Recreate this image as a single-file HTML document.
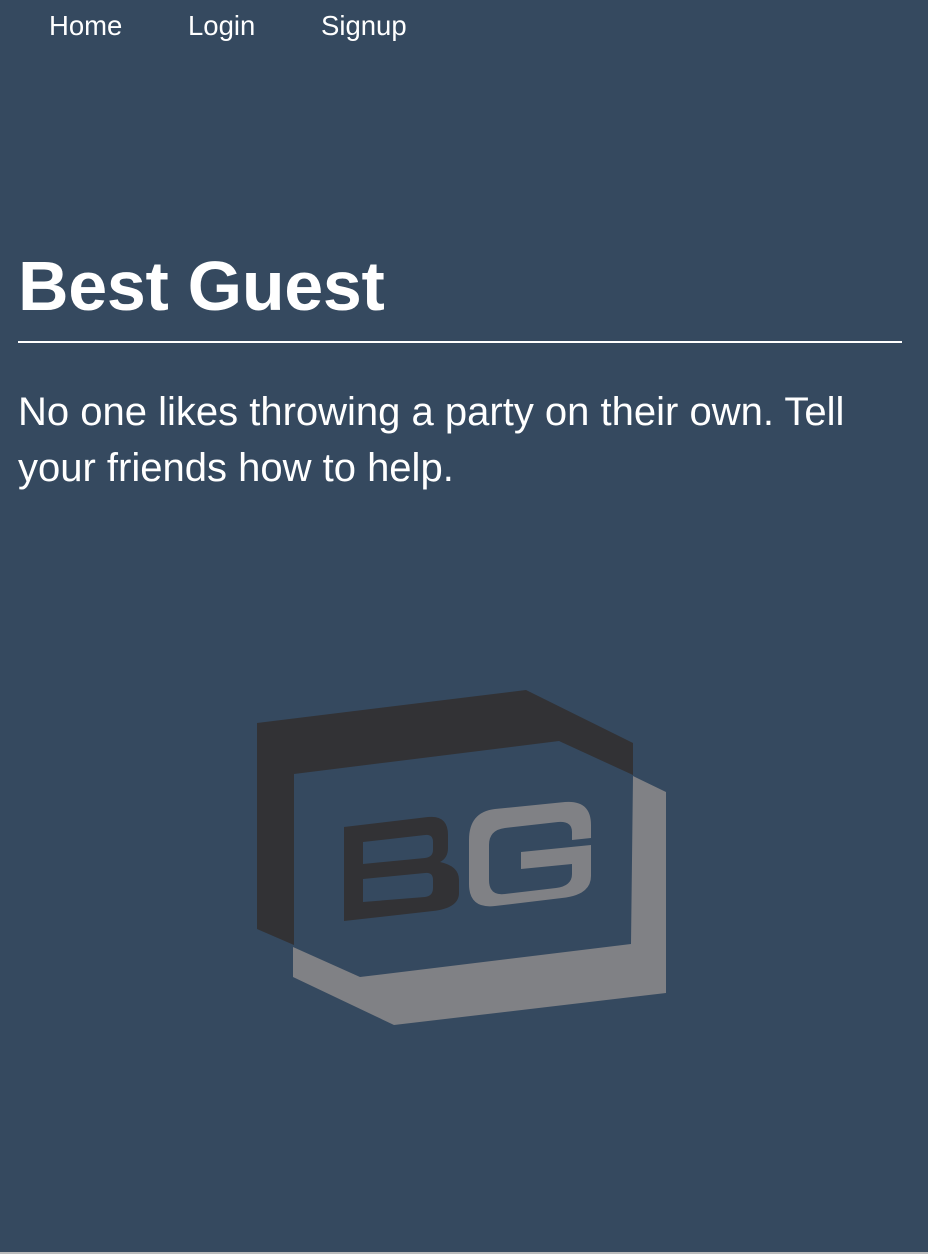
<!DOCTYPE html>
<html><head><meta charset="utf-8"><style>
html,body{margin:0;padding:0}
body{width:928px;height:1254px;background:#35495f;font-family:"Liberation Sans",Arial,sans-serif;color:#fff;position:relative;overflow:hidden}
.nav a{position:absolute;top:10px;font-size:27.5px;color:#fff;text-decoration:none;line-height:32px}
h1{position:absolute;left:18px;top:246px;margin:0;font-size:70px;font-weight:bold;line-height:80px;letter-spacing:-0.3px}
.hr{position:absolute;left:18px;top:341px;width:884px;height:2px;background:#fff}
p{position:absolute;left:18px;top:384px;margin:0;font-size:40px;line-height:56px;width:870px}
svg{position:absolute;left:0;top:0}
.bot{position:absolute;left:0;bottom:0;width:928px;height:2px;background:#bbb}
</style></head><body>
<div class="nav"><a style="left:49px">Home</a><a style="left:188px">Login</a><a style="left:321px">Signup</a></div>
<h1>Best Guest</h1>
<div class="hr"></div>
<p>No one likes throwing a party on their own. Tell your friends how to help.</p>
<svg width="928" height="1254" viewBox="0 0 928 1254">
<polygon fill="#323235" points="257,723 526,690 633,743 633,775 559,741 294,774 294,945 257,929"/>
<polygon fill="#808185" points="633,776 666,792 666,993 394,1025 293,977 293,947 360,977 631,944"/>
<path fill="#323235" fill-rule="evenodd" d="M344,827 L428,817 Q448,815 448,835 L448,848 Q448,858 440,862 Q459,866 459,880 L459,893 Q459,908 433,911 L344,921 Z M363,842 L425,835 Q433,834 433,842 L433,850 Q433,857 425,858 L363,864 Z M363,879 L425,873 Q433,872 433,880 L433,888 Q433,896 425,897 L363,902 Z"/>
<path fill="#808185" d="M469,840 Q469,812 495,809 L565,802 Q591,800 591,825 L591,838 L572,840 L572,832 Q572,821 558,822 L505,828 Q489,830 489,845 L489,880 Q489,896 505,894 L556,888 Q572,886 572,874 L572,864 L521,869 L521,852 L591,845 L591,876 Q591,895 562,898 L495,906 Q469,909 469,884 Z"/>
</svg>
<div class="bot"></div>
</body></html>
